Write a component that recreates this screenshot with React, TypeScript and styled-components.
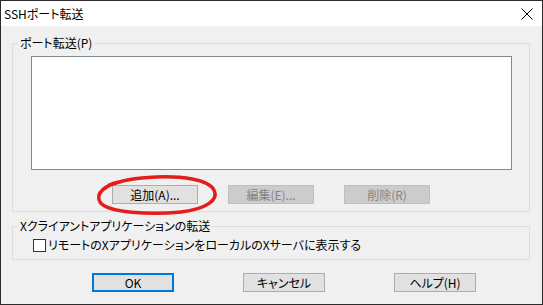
import styled, { createGlobalStyle } from "styled-components";

const GlobalStyle = createGlobalStyle`
    html, body {
        margin: 0;
        padding: 0;
        background: #f0f0f0;
    }
    body {
        font-family: "Noto Sans CJK JP", "Noto Sans", sans-serif;
        font-size: 12px;
        font-feature-settings: "palt";
        color: #000;
    }
`

const Window = styled.div`
    position: relative;
    width: 543px;
    height: 305px;
    box-sizing: border-box;
    border: 1px solid #2b2b2b;
    background: #f0f0f0;
    display: flex;
    flex-direction: column;
`

const TitleBar = styled.div`
    height: 25px;
    background: #fff;
    display: flex;
    align-items: center;
    justify-content: space-between;
    padding: 0 9px 0 3px;
`

const Title = styled.span`
    font-size: 12px;
    line-height: 16px;
`

const Body = styled.div`
    padding: 9px 12px 0 11px;
    display: flex;
    flex-direction: column;
`

const Group = styled.fieldset<{ $height: number }>`
    margin: 0;
    padding: 0;
    height: ${props => props.$height}px;
    box-sizing: border-box;
    border: 1px solid #dcdcdc;
    min-width: 0;
`

const Legend = styled.legend`
    margin-left: 5px;
    padding: 0 2px;
    font-size: 12px;
    line-height: 16px;
`

const ListBox = styled.div`
    margin: 5px 17px 0 18px;
    height: 112px;
    background: #fff;
    border: 1px solid #828790;
`

const ButtonRow = styled.div<{ $gap: number }>`
    display: flex;
    justify-content: center;
    gap: ${props => props.$gap}px;
`

const Button = styled.button<{ $primary?: boolean }>`
    width: 86px;
    height: 19px;
    box-sizing: border-box;
    padding: 0;
    margin: 0;
    font-family: inherit;
    font-size: 12px;
    font-feature-settings: "palt";
    line-height: 14px;
    color: #000;
    background: #e1e1e1;
    border: ${props => props.$primary ? "2px solid #0078d7" : "1px solid #adadad"};

    &:disabled {
        color: #838383;
        background: #cccccc;
        border-color: #bfbfbf;
    }
`

const CheckRow = styled.label`
    display: flex;
    align-items: center;
    gap: 2px;
    margin: 3px 0 0 20px;
    line-height: 16px;
`

const CheckBox = styled.span`
    width: 13px;
    height: 13px;
    box-sizing: border-box;
    border: 1px solid #333;
    background: #fff;
`

const Footer = styled.div`
    display: flex;
    gap: 69px;
    padding: 13px 0 0 91px;
`

const FooterButton = styled(Button)`
    width: 82px;
`

const Mark = styled.svg`
    position: absolute;
    left: 0;
    top: 0;
    pointer-events: none;
`

export default function App() {
    return (
        <>
            <GlobalStyle />
            <Window>
                <TitleBar>
                    <Title>SSHポート転送</Title>
                    <svg width="12" height="12" viewBox="0 0 12 12">
                        <path d="M0.5 0.5 L11.5 11.5 M11.5 0.5 L0.5 11.5" stroke="#000" strokeWidth="1" />
                    </svg>
                </TitleBar>
                <Body>
                    <Group $height={177}>
                        <Legend>ポート転送(P)</Legend>
                        <ListBox />
                        <ButtonRow $gap={30} style={{ marginTop: 15 }}>
                            <Button>追加(A)...</Button>
                            <Button disabled>編集(E)...</Button>
                            <Button disabled>削除(R)</Button>
                        </ButtonRow>
                    </Group>
                    <Group $height={42} style={{ marginTop: 6 }}>
                        <Legend>Xクライアントアプリケーションの転送</Legend>
                        <CheckRow>
                            <CheckBox />
                            リモートのXアプリケーションをローカルのXサーバに表示する
                        </CheckRow>
                    </Group>
                </Body>
                <Footer>
                    <FooterButton $primary>OK</FooterButton>
                    <FooterButton>キャンセル</FooterButton>
                    <FooterButton>ヘルプ(H)</FooterButton>
                </Footer>
                <Mark width="543" height="305">
                    <path
                        d="M122 180 C 104 184, 94 192, 99 201 C 106 212, 150 214, 180 211 C 205 208, 218 199, 213 189 C 207 178, 180 175, 155 176 C 135 177, 118 180, 108 184"
                        fill="none"
                        stroke="#e41c1c"
                        strokeWidth="3.5"
                        strokeLinecap="round"
                    />
                </Mark>
            </Window>
        </>
    )
}
